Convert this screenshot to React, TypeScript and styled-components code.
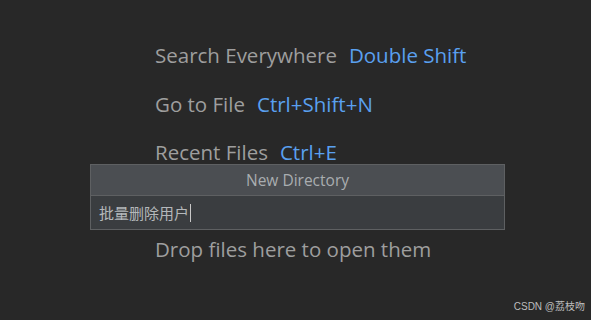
import styled, { createGlobalStyle } from "styled-components";

const Global = createGlobalStyle`
  html, body {
    margin: 0;
    padding: 0;
    background: #282828;
  }
  #root {
    width: 591px;
    height: 320px;
  }
`;

const Screen = styled.div`
  position: relative;
  width: 591px;
  height: 320px;
  background: #282828;
  overflow: hidden;
  font-family: "Open Sans", "Noto Sans", sans-serif;
`;

const Hints = styled.div`
  display: flex;
  flex-direction: column;
  gap: 20.5px;
  padding: 41px 0 0 155px;
`;

const Hint = styled.div<{ $skip?: boolean }>`
  height: 28px;
  display: flex;
  align-items: center;
  gap: 12px;
  margin-top: ${(p) => (p.$skip ? "48.5px" : "0")};
  font-size: 20.5px;
  color: #9e9e9e;
  white-space: nowrap;
`;

const Key = styled.span`
  color: #5aa0f0;
`;

const Popup = styled.div`
  position: absolute;
  left: 90px;
  top: 164px;
  width: 413px;
  border: 1px solid #5e6062;
  background: #3c3f41;
`;

const PopupTitle = styled.div`
  height: 30px;
  display: flex;
  align-items: center;
  justify-content: center;
  background: #4b4e52;
  border-bottom: 1px solid #5e6062;
  color: #a9adb0;
  font-size: 15.5px;
`;

const Field = styled.div`
  height: 33px;
  display: flex;
  align-items: center;
  padding-left: 8px;
  background: #3a3d40;
  color: #b4b8bb;
  font-size: 15px;
  font-family: "Noto Sans CJK SC", sans-serif;
`;

const Caret = styled.span`
  display: inline-block;
  width: 1px;
  height: 18px;
  margin-left: 1px;
  background: #c8c8c8;
`;

const Watermark = styled.div`
  position: absolute;
  right: 6px;
  bottom: 7px;
  font-size: 10px;
  color: #bdbdbd;
  font-family: "Liberation Sans", "Noto Sans CJK SC", sans-serif;
`;

const hints = [
  { label: "Search Everywhere", key: "Double Shift" },
  { label: "Go to File", key: "Ctrl+Shift+N" },
  { label: "Recent Files", key: "Ctrl+E" },
  { label: "Drop files here to open them", key: "", skip: true },
];

export default function App() {
  return (
    <Screen>
      <Global />
      <Hints>
        {hints.map((h) => (
          <Hint key={h.label} $skip={h.skip}>
            {h.label}
            {h.key && <Key>{h.key}</Key>}
          </Hint>
        ))}
      </Hints>
      <Popup>
        <PopupTitle>New Directory</PopupTitle>
        <Field>
          批量删除用户
          <Caret />
        </Field>
      </Popup>
      <Watermark>CSDN @荔枝吻</Watermark>
    </Screen>
  );
}
